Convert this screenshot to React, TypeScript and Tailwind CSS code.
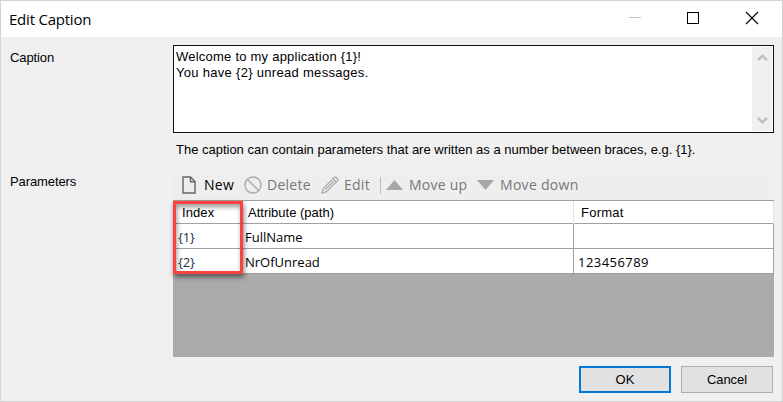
import type { ReactNode } from "react";

const sans = "font-['Liberation_Sans',Arial,sans-serif]";
const ui = "font-['Open_Sans','Noto_Sans',sans-serif]";

function ToolItem({ icon, label, className }: { icon: ReactNode; label: string; className: string }) {
  return (
    <div className={`flex shrink-0 items-center ${className}`}>
      {icon}
      <span>{label}</span>
    </div>
  );
}

function TitleBar() {
  return (
    <header className="flex h-9 shrink-0 items-center bg-white pl-2">
      <h1 className={`${ui} grow text-[15px] leading-5 tracking-[-0.22px] text-black`}>Edit Caption</h1>
      <svg width="153" height="36" viewBox="0 0 153 36" fill="none" shapeRendering="crispEdges">
        <path d="M0 16.5h12" stroke="#c4c4c4" />
        <rect x="58.5" y="11.5" width="11" height="11" stroke="#000" />
        <path d="M117 11l12 12M129 11l-12 12" stroke="#000" strokeWidth="1.1" shapeRendering="auto" />
      </svg>
    </header>
  );
}

function ScrollBar() {
  return (
    <div className="flex w-5 flex-col items-center justify-between bg-[#f0f0f0] py-[7px]">
      <svg width="11" height="8" viewBox="0 0 11 8" fill="none" stroke="#bfbfbf" strokeWidth="2.4">
        <path d="M1 6.2l4.5-4.5 4.5 4.5" />
      </svg>
      <svg width="11" height="8" viewBox="0 0 11 8" fill="none" stroke="#bfbfbf" strokeWidth="2.4">
        <path d="M1 1.8l4.5 4.5 4.5-4.5" />
      </svg>
    </div>
  );
}

function Toolbar() {
  return (
    <div className={`${ui} flex h-[30px] items-center bg-[#eee] pl-[9px] text-[14px] leading-5 whitespace-nowrap text-[#787878]`}>
      <ToolItem
        label="New"
        className="w-[62px] gap-2 tracking-[0.3px] text-black"
        icon={
          <svg width="14" height="18" viewBox="0 0 14 18" fill="none" stroke="#666" strokeWidth="1.4">
            <path d="M1 1h7.5L13 5.5V17H1zM8.5 1v4.8H13" />
          </svg>
        }
      />
      <ToolItem
        label="Delete"
        className="w-[77px] gap-[5px] tracking-[0.25px]"
        icon={
          <svg width="18" height="18" viewBox="0 0 18 18" fill="none" stroke="#aaa" strokeWidth="1.4">
            <circle cx="9" cy="9" r="8" />
            <path d="M3.4 3.4l11.2 11.2" />
          </svg>
        }
      />
      <ToolItem
        label="Edit"
        className="w-[59px] gap-[5px] tracking-[0.25px]"
        icon={
          <svg width="18" height="18" viewBox="0 0 18 18" fill="none" stroke="#aaa" strokeWidth="1.3" strokeLinejoin="round">
            <path d="M0.8 17.2l1.6-4.8L13 1.7q1.4-1.2 2.7 0l.6.6q1.2 1.3 0 2.7L5.6 15.6zM12 2.9l3.2 3.2M4.2 13.8L12.8 5.2" />
          </svg>
        }
      />
      <div className="h-[17px] w-px bg-[#bdbdbd]" />
      <ToolItem
        label="Move up"
        className="ml-[5px] w-[91px] gap-[6px] tracking-[0.25px]"
        icon={
          <svg width="17" height="10" viewBox="0 0 17 10">
            <path d="M0 10L8.5 0 17 10z" fill="#a7a7a7" />
          </svg>
        }
      />
      <ToolItem
        label="Move down"
        className="gap-[6px] tracking-[0.3px]"
        icon={
          <svg width="17" height="10" viewBox="0 0 17 10">
            <path d="M0 0h17L8.5 10z" fill="#a7a7a7" />
          </svg>
        }
      />
    </div>
  );
}

const rows = [
  { index: "{1}", attribute: "FullName", format: "" },
  { index: "{2}", attribute: "NrOfUnread", format: "123456789" },
];

function ParameterGrid() {
  return (
    <div className="relative h-[157px] w-[601px] border-t border-[#a0a0a0] bg-[#ababab] text-black">
      <div className={`${sans} grid h-[23px] grid-cols-[68px_333px_200px] border-b border-[#a0a0a0] bg-white text-[13px] leading-[23px]`}>
        <div className="border-r border-[#e5e5e5] pl-[9px] tracking-[0.1px]">Index</div>
        <div className="border-r border-[#e5e5e5] pl-[7px]">Attribute (path)</div>
        <div className="border-r border-[#e5e5e5] pl-[7px] tracking-[0.25px]">Format</div>
      </div>
      {rows.map((row) => (
        <div
          key={row.index}
          className={`${ui} grid h-[25px] grid-cols-[68px_333px_200px] border-b border-[#a0a0a0] bg-white text-[13px] leading-[26px]`}
        >
          <div className="border-r border-[#a0a0a0] pl-[5px] tracking-[-0.2px] text-[#1c2e4a]">{row.index}</div>
          <div className="border-r border-[#a0a0a0] pl-1">{row.attribute}</div>
          <div className="border-r border-[#a0a0a0] pl-1 tracking-[0.45px]">{row.format}</div>
        </div>
      ))}
      <div className="absolute top-0 left-0 h-[73px] w-[70px] border-3 border-[#fa4243] shadow-[1px_3px_5px_rgba(0,0,0,0.5),inset_1px_3px_5px_rgba(0,0,0,0.4)]" />
    </div>
  );
}

export default function App() {
  return (
    <div className={`${sans} flex h-[402px] w-[783px] flex-col overflow-hidden border border-[#d3d3d3] bg-[#f0f0f0] text-[13px] leading-4 text-black`}>
      <TitleBar />
      <main className="grid grid-cols-[163px_601px] pt-2 pl-[9px]">
        <label className="pt-[5px] tracking-[-0.1px]">Caption</label>
        <div className="flex h-[88px] border border-[#111] bg-white p-px">
          <div className="grow pt-[2px] pl-px whitespace-nowrap">
            <p className="tracking-[0.23px]">Welcome to my application {"{1}"}!</p>
            <p className="tracking-[0.3px]">You have {"{2}"} unread messages.</p>
          </div>
          <ScrollBar />
        </div>
        <p className="col-start-2 h-[37px] pt-[9px] pl-[3px] tracking-[-0.01px] whitespace-nowrap">
          The caption can contain parameters that are written as a number between braces, e.g. {"{1}"}.
        </p>
        <label className="pt-[4px] tracking-[-0.1px]">Parameters</label>
        <div>
          <Toolbar />
          <ParameterGrid />
        </div>
      </main>
      <footer className="mt-[9px] flex justify-end gap-2.5 pr-[9px]">
        <button className="h-[27px] w-[92px] border-2 border-[#0078d7] bg-[#e1e1e1]">OK</button>
        <button className="h-[27px] w-[92px] border border-[#adadad] bg-[#e1e1e1] tracking-[-0.1px]">Cancel</button>
      </footer>
    </div>
  );
}
